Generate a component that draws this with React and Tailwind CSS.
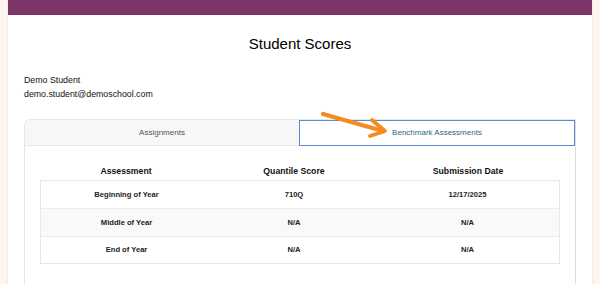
import React from 'react';

const rows = [
    { name: 'Beginning of Year', score: '710Q', date: '12/17/2025' },
    { name: 'Middle of Year', score: 'N/A', date: 'N/A' },
    { name: 'End of Year', score: 'N/A', date: 'N/A' },
];

function App() {
    return (
        <div className="h-[284px] overflow-hidden bg-[#fdf6f1] px-2 font-['Liberation_Sans',Arial,sans-serif]">
            <div className="h-full bg-white shadow-[0_0_0_1px_#f1ecea]">
                <div className="h-[15px] bg-[#7b3566]" />

                <h1 className="mt-[19px] text-center text-[15px] leading-[20px] text-black">Student Scores</h1>

                <div className="mt-[19px] px-4 text-[8.8px] leading-[14px] text-[#111]">
                    <p>Demo Student</p>
                    <p>demo.student@demoschool.com</p>
                </div>

                {/* tabs */}
                <div className="relative mx-4 mt-[18px] h-[200px] rounded-tl-md border border-[#e6e6e6] border-r-[#dcdcdc]">
                    <div className="flex h-[26px]">
                        <div className="flex flex-1 items-center justify-center rounded-tl-md border-b border-[#e8e8e8] bg-[#f7f7f7] text-[8px] text-[#555]">
                            Assignments
                        </div>
                        <div className="flex flex-1 items-center justify-center border-[1.5px] border-[#5a8bcf] bg-white text-[8px] text-[#2c6889]">
                            Benchmark Assessments
                        </div>
                    </div>

                    <svg className="absolute left-[296px] top-[-9px]" width="70" height="30" viewBox="0 0 70 30">
                        <path d="M2 3 L62 20" stroke="#f58a1f" strokeWidth="4.2" strokeLinecap="round" fill="none" />
                        <path d="M51 9 L64 20 L49 25" stroke="#f58a1f" strokeWidth="3.8" strokeLinecap="round" strokeLinejoin="round" fill="none" />
                    </svg>

                    <div className="px-[15px] pt-[13px]">
                        <div className="grid h-[21px] grid-cols-[172px_164px_184px] items-end pb-[4px] text-center text-[8.7px] leading-[10px] font-bold text-[#111]">
                            <div>Assessment</div>
                            <div>Quantile Score</div>
                            <div>Submission Date</div>
                        </div>
                        <div className="border border-[#e6e6e6]">
                            {rows.map((row, index) => (
                                <div
                                    key={index}
                                    className={`grid h-[27.3px] grid-cols-[171px_164px_183px] items-center text-center text-[7.6px] font-bold text-[#222] ${index > 0 ? 'border-t border-[#ececec]' : ''} ${index === 1 ? 'bg-[#f9f9f9]' : 'bg-white'}`}
                                >
                                    <div>{row.name}</div>
                                    <div>{row.score}</div>
                                    <div>{row.date}</div>
                                </div>
                            ))}
                        </div>
                    </div>
                </div>
            </div>
        </div>
    );
}

export default App;
